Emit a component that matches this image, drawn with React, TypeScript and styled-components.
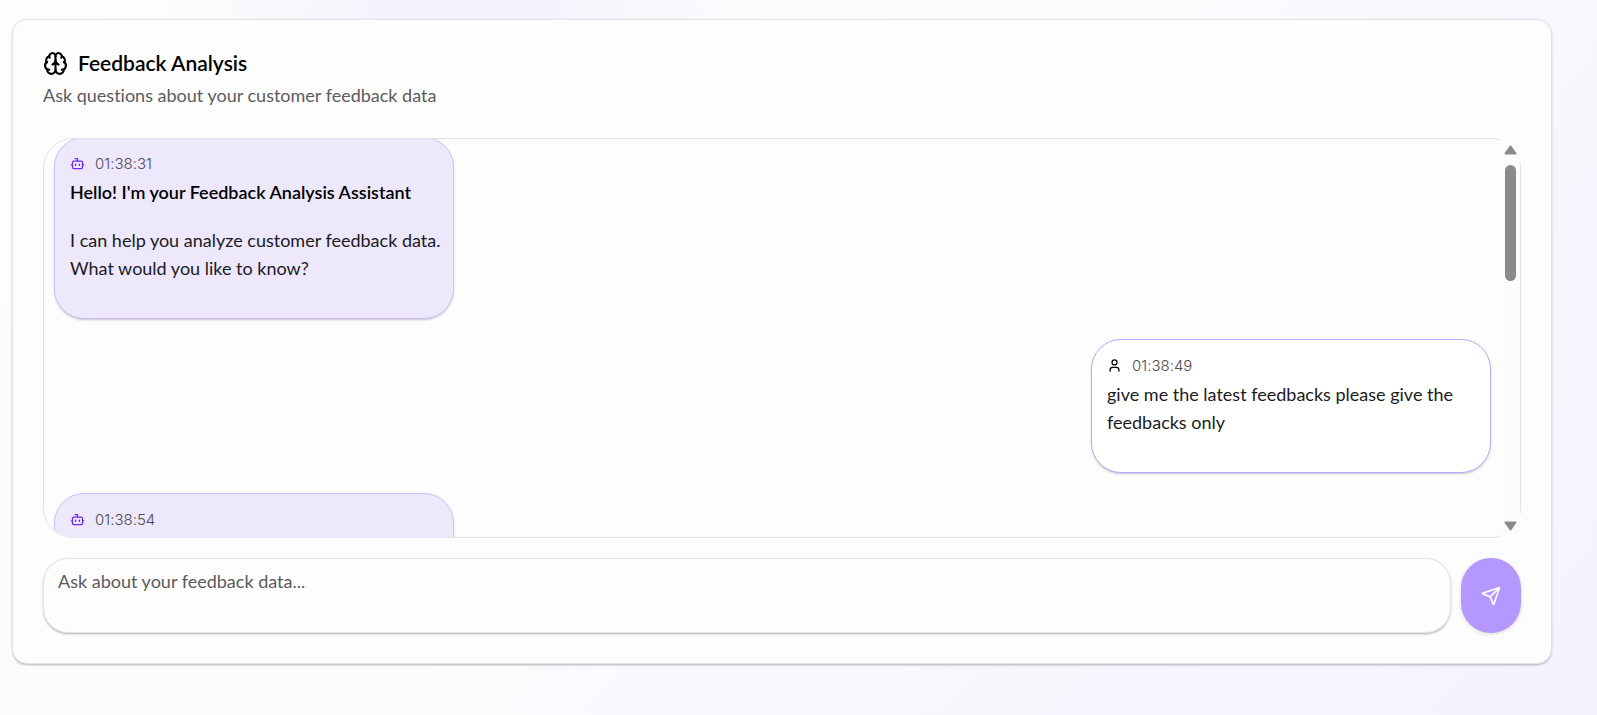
import React, { useLayoutEffect, useRef } from "react";
import styled, { createGlobalStyle } from "styled-components";
import { Bot, Brain, Send, User } from "lucide-react";

const GlobalStyle = createGlobalStyle`
  *, *::before, *::after { box-sizing: border-box; }
  body {
    margin: 0;
    font-family: Lato, "Open Sans", sans-serif;
    font-size: 18px;
    line-height: 28px;
    font-variant-ligatures: none;
    color: #000;
    background: #fcfcfd;
  }
  h1, h2, p { margin: 0; }
`;

const Page = styled.div`
  min-height: 100vh;
  padding: 19px 45px 51px 12px;
  background:
    radial-gradient(ellipse 300px 240px at 29% 0, rgba(245, 244, 252, 1) 30%, rgba(245, 244, 252, 0) 100%),
    linear-gradient(135deg, #fdfdfd 0%, #fcfcfe 45%, #f7f6fd 75%, #f5f2fe 100%);
`;

const Card = styled.main`
  display: flex;
  flex-direction: column;
  gap: 20px;
  padding: 29px 30px 30px;
  border: 1px solid #e2e2e5;
  border-radius: 15px;
  background: #fdfdfd;
  box-shadow: 0 1px 3px rgba(0, 0, 0, 0.12), 0 2px 2px -1px rgba(0, 0, 0, 0.18);
`;

const Header = styled.header`
  padding-bottom: 9px;
`;

const Title = styled.h1`
  display: flex;
  align-items: center;
  gap: 10px;
  font-size: 21px;
  font-weight: 600;
  line-height: 28px;
`;

const Subtitle = styled.p`
  margin-top: 4px;
  color: #5b5b5e;
`;

const ChatFrame = styled.section`
  display: flex;
  height: 400px;
  border: 1px solid #e4e4e6;
  border-radius: 30px;
`;

const Messages = styled.div`
  flex: 1;
  display: flex;
  flex-direction: column;
  gap: 20px;
  padding: 10px;
  border-radius: 29px 0 0 29px;
  overflow: hidden;
`;

const Bubble = styled.article<{ $own?: boolean }>`
  flex: none;
  align-self: ${(p) => (p.$own ? "flex-end" : "flex-start")};
  width: 400px;
  max-width: 100%;
  padding: 15px 5px 36px 15px;
  border: 1px solid ${(p) => (p.$own ? "#bba8fb" : "#cfc0fb")};
  border-radius: 30px;
  background: ${(p) => (p.$own ? "#fff" : "#ede8fc")};
  box-shadow: 0 1px 3px rgba(0, 0, 0, 0.1), 0 2px 2px -1px rgba(0, 0, 0, 0.14);
  color: #1b1b1e;
  white-space: pre-line;
`;

const Meta = styled.div<{ $own?: boolean }>`
  display: flex;
  align-items: center;
  gap: 10px;
  margin-bottom: 4px;
  color: ${(p) => (p.$own ? "#000" : "#6d28f5")};
`;

const Time = styled.time`
  font-family: Inter, sans-serif;
  font-size: 15px;
  font-weight: 300;
  line-height: 21px;
  color: #4c4c52;
`;

const Heading = styled.h2`
  margin-bottom: 20px;
  font-size: 18px;
  font-weight: 600;
  line-height: 28px;
  color: #000;
`;

/* The track is opaque and square, so it hides the frame's right-hand corners. */
const Scrollbar = styled.div`
  flex: none;
  display: flex;
  flex-direction: column;
  align-items: center;
  width: 19px;
  margin: -1px 0;
  padding: 7px 0;
  background: #fcfcfc;
`;

const Thumb = styled.div`
  width: 11px;
  height: 116px;
  margin: 10px 0 auto;
  border-radius: 6px;
  background: #8b8b8b;
`;

const Arrow = styled.svg`
  display: block;
  width: 13px;
  height: 10px;
  fill: #8b8b8b;
  stroke: #8b8b8b;
  stroke-width: 2;
  stroke-linejoin: round;
`;

const Composer = styled.form`
  display: flex;
  gap: 10px;
`;

const Input = styled.textarea`
  flex: 1;
  min-width: 0;
  height: 75px;
  padding: 8px 14px;
  border: 1px solid #e4e4e6;
  border-radius: 25px;
  background: #fdfdfd;
  font: inherit;
  color: #1b1b1e;
  resize: none;
  outline: none;
  box-shadow: 0 1px 3px rgba(0, 0, 0, 0.14), 0 2px 2px -1px rgba(0, 0, 0, 0.2);
  &::placeholder { color: #5b5b5e; opacity: 1; }
`;

const SendButton = styled.button`
  display: grid;
  place-items: center;
  width: 60px;
  height: 75px;
  padding: 0;
  border: 0;
  border-radius: 30px;
  background: #b497ff;
  color: #fff;
  cursor: pointer;
  box-shadow: 0 1px 4px rgba(0, 0, 0, 0.14);
`;

type Message = { time: string; own?: boolean; heading?: string; text: string };

const messages: Message[] = [
  {
    time: "01:38:31",
    heading: "Hello! I'm your Feedback Analysis Assistant",
    text: "I can help you analyze customer feedback data.\nWhat would you like to know?",
  },
  { time: "01:38:49", own: true, text: "give me the latest feedbacks please give the feedbacks only" },
  { time: "01:38:54", text: "" },
];

export default function App() {
  const list = useRef<HTMLDivElement>(null);

  // The conversation is scrolled just past its top padding.
  useLayoutEffect(() => {
    if (list.current) list.current.scrollTop = 12;
  }, []);

  return (
    <>
      <GlobalStyle />
      <Page>
        <Card>
          <Header>
            <Title>
              <Brain size={25} aria-hidden />
              Feedback Analysis
            </Title>
            <Subtitle>Ask questions about your customer feedback data</Subtitle>
          </Header>
          <ChatFrame aria-label="Conversation">
            <Messages ref={list}>
              {messages.map((m) => (
                <Bubble key={m.time} $own={m.own}>
                  <Meta $own={m.own}>
                    {m.own ? <User size={15} aria-hidden /> : <Bot size={15} aria-hidden />}
                    <Time>{m.time}</Time>
                  </Meta>
                  {m.heading && <Heading>{m.heading}</Heading>}
                  <p>{m.text}</p>
                </Bubble>
              ))}
            </Messages>
            <Scrollbar aria-hidden>
              <Arrow viewBox="0 0 13 10"><path d="M6.5 1.5 11.5 8.5h-10z" /></Arrow>
              <Thumb />
              <Arrow viewBox="0 0 13 10"><path d="M6.5 8.5 11.5 1.5h-10z" /></Arrow>
            </Scrollbar>
          </ChatFrame>
          <Composer onSubmit={(e) => e.preventDefault()}>
            <Input aria-label="Your question" placeholder="Ask about your feedback data..." />
            <SendButton type="submit" aria-label="Send">
              <Send size={20} aria-hidden />
            </SendButton>
          </Composer>
        </Card>
      </Page>
    </>
  );
}
